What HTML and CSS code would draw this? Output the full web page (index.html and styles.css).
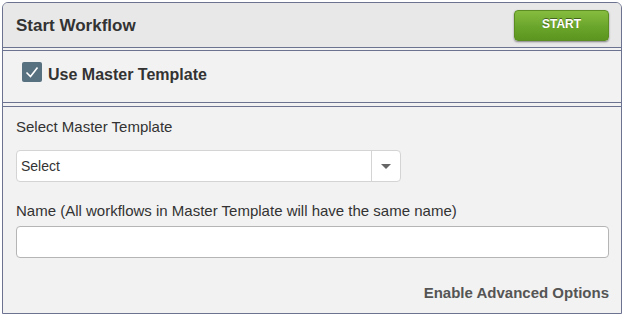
FILE: index.html
```html
<!DOCTYPE html>
<html lang="en">
<head>
  <meta charset="UTF-8" />
  <meta name="viewport" content="width=device-width, initial-scale=1.0" />
  <title>Start Workflow</title>
  <link rel="stylesheet" href="styles.css">
</head>
<body>
  <div class="panel">
    <header class="panel-head">
      <h1>Start Workflow</h1>
      <button class="start-btn">START</button>
    </header>
    <div class="master">
      <span class="check">
        <svg width="20" height="20" viewBox="0 0 20 20"><path d="M4.5 10.5 L8.5 14.5 L15.5 5.5" fill="none" stroke="#fff" stroke-width="1.6"/></svg>
      </span>
      <span class="master-label">Use Master Template</span>
    </div>
    <div class="panel-body">
      <label class="field-label">Select Master Template</label>
      <div class="select-box">
        <span class="select-text">Select</span>
        <span class="select-arrow"><i class="caret"></i></span>
      </div>
      <label class="field-label name-label">Name (All workflows in Master Template will have the same name)</label>
      <div class="text-input"></div>
      <div class="advanced">Enable Advanced Options</div>
    </div>
  </div>
</body>
</html>
```

FILE: styles.css
```css
body {
  margin: 0;
  background: #fff;
  font-family: 'Liberation Sans', Arial, sans-serif;
  color: #333;
}
.panel {
  margin: 2px 1px 0 2px;
  border: 1px solid #6c7390;
  border-radius: 6px 6px 0 0;
  background: #f2f2f2;
}
.panel-head {
  display: flex;
  justify-content: space-between;
  align-items: center;
  height: 44px;
  padding: 0 12px 0 13px;
  background: #e8e8e8;
  border-bottom: 1px solid #6c7390;
  border-radius: 5px 5px 0 0;
}
.panel-head h1 {
  margin: 2px 0 0;
  font-size: 17px;
  font-weight: bold;
  color: #333;
}
.start-btn {
  width: 95px;
  height: 31px;
  border: 1px solid #5b8d22;
  border-radius: 4px;
  background: linear-gradient(#86bd40, #6aa52b 55%, #5c951f);
  box-shadow: 0 1px 2px rgba(0, 0, 0, 0.45);
  color: #fff;
  font-family: 'Liberation Sans', Arial, sans-serif;
  font-size: 12px;
  font-weight: bold;
  text-shadow: 0 -1px 0 rgba(0, 0, 0, 0.45);
  padding: 0 0 3px;
}
.master {
  display: flex;
  align-items: flex-start;
  gap: 6px;
  height: 40px;
  margin-top: 2px;
  padding: 11px 0 0 19px;
  border-top: 1px solid #6c7390;
  border-bottom: 1px solid #6c7390;
}
.check {
  display: block;
  width: 20px;
  height: 20px;
  border-radius: 2px;
  background: #587181;
}
.check svg {
  display: block;
}
.master-label {
  margin-top: 4px;
  font-size: 16px;
  font-weight: bold;
  line-height: 18px;
}
.panel-body {
  margin-top: 3px;
  padding: 11px 12px 12px 13px;
  border-top: 1px solid #6c7390;
}
.field-label {
  display: block;
  font-size: 15px;
  line-height: 17px;
}
.select-box {
  display: flex;
  width: 383px;
  height: 30px;
  margin-top: 15px;
  background: #fff;
  border: 1px solid #d4d4d4;
  border-radius: 4px;
}
.select-text {
  flex: 1;
  padding-left: 4px;
  font-size: 14px;
  line-height: 30px;
}
.select-arrow {
  display: flex;
  justify-content: center;
  align-items: center;
  width: 28px;
  border-left: 1px solid #d4d4d4;
}
.caret {
  width: 0;
  height: 0;
  border-left: 5px solid transparent;
  border-right: 5px solid transparent;
  border-top: 5px solid #666;
}
.name-label {
  margin-top: 20px;
}
.text-input {
  height: 30px;
  margin-top: 7px;
  background: #fff;
  border: 1px solid #b5b5b5;
  border-radius: 4px;
}
.advanced {
  margin-top: 26px;
  text-align: right;
  font-size: 15px;
  font-weight: bold;
  line-height: 17px;
  color: #555;
}
```
